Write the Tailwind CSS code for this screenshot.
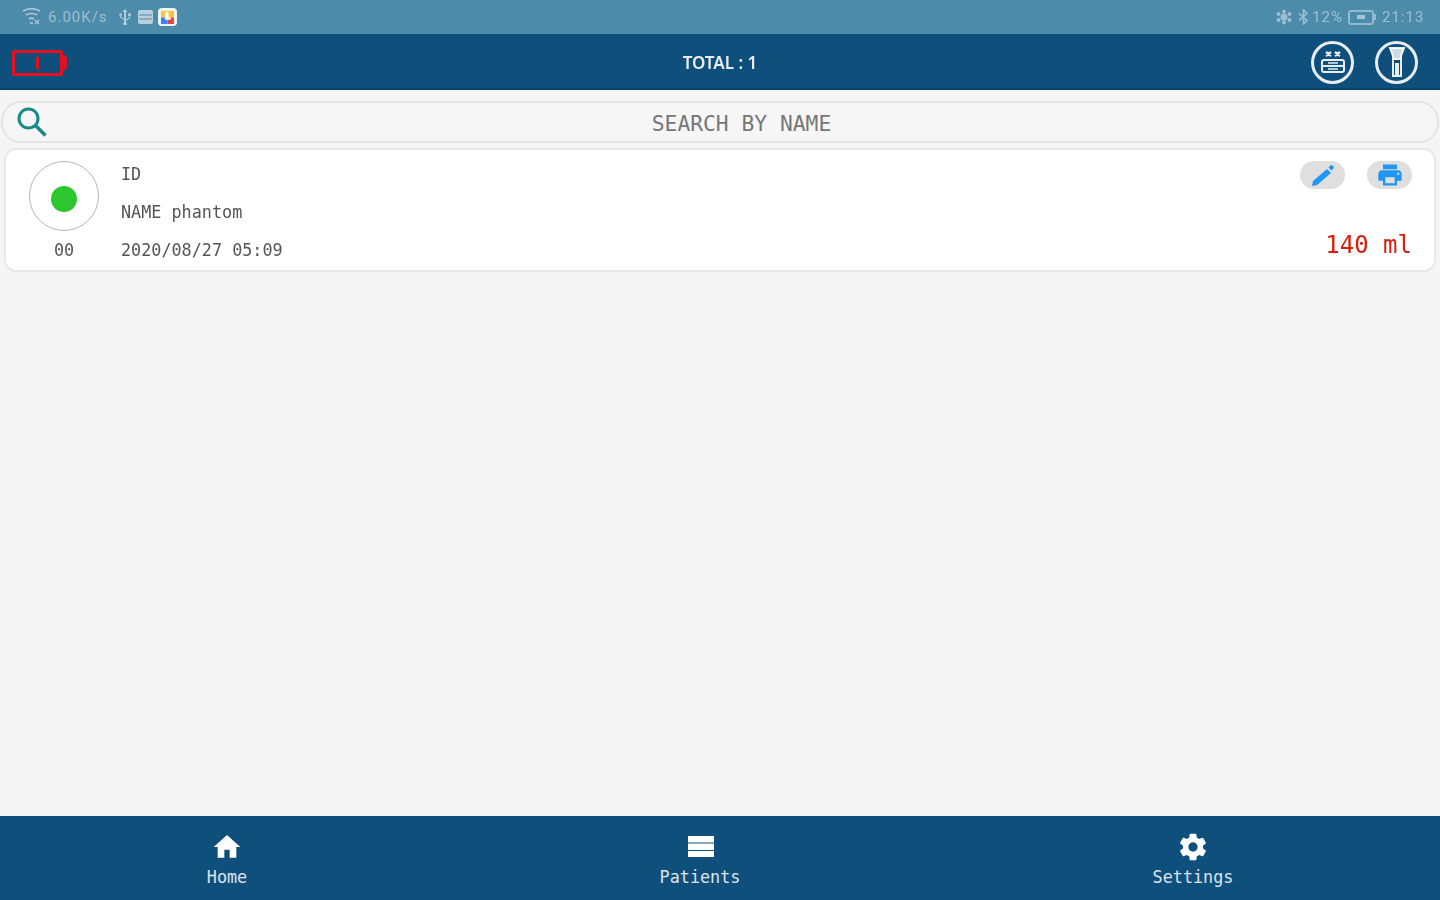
<!DOCTYPE html>
<html lang="en">
<head>
    <meta charset="UTF-8">
    <meta name="viewport" content="width=device-width, initial-scale=1.0">
    <title>Patients</title>
    <script src="https://cdn.jsdelivr.net/npm/@tailwindcss/browser@4"></script>
</head>
<body class="bg-[#f5f5f5] overflow-hidden">
    <div class="w-[1440px] h-[900px] flex flex-col font-['DejaVu_Sans_Mono',monospace] blur-[0.7px]">

        <!-- Status bar -->
        <div class="h-[34px] shrink-0 bg-[#4c8ba9] flex items-center justify-between pl-[22px] pr-[16px] text-[15px] text-white/45 font-['Roboto',sans-serif]">
            <div class="flex items-center">
                <svg class="w-[19px] h-[18px]" viewBox="0 0 19 18" fill="none" stroke="#fff" stroke-opacity=".55" stroke-width="1.6"><path d="M1 3c5-3 12-3 17 0M4 7c3-2 8-2 11 0M7 11c1.500-1 3.500-1 5 0"/><path d="M8 15h3"/><path d="M13 12l4 4M17 12l-4 4" stroke-width="1.200"/></svg>
                <span class="ml-[7px] w-[62px] tracking-[1px]">6.00K/s</span>
                <svg class="ml-[8px] w-[14px] h-[16px]" viewBox="0 0 14 16" fill="#fff" fill-opacity=".55"><path d="M7 0l2.500 3H8v7.500l3-2V7h-1V4.500h3V7h-1v2.200L8 12v1.200a1.800 1.800 0 1 1-2 0V11L2 8.500V6.700a1.300 1.300 0 1 1 1 0V8l3 1.700V3H4.500z"/></svg>
                <div class="ml-[6px] w-[15px] h-[14px] rounded-[2px] bg-white/60 flex flex-col justify-center gap-[2px] px-[1px]">
                    <div class="h-[2px] bg-[#4c8ba9]/50"></div>
                    <div class="h-[2px] bg-[#4c8ba9]/50"></div>
                </div>
                <div class="ml-[5px] w-[19px] h-[18px] rounded-[4px] bg-white/90 flex items-center justify-center">
                    <svg class="w-[13px] h-[13px]" viewBox="0 0 12 12"><rect width="6" height="6" fill="#f6c63a"/><rect x="6" width="6" height="6" fill="#f6c63a"/><rect y="6" width="6" height="6" fill="#3b82f6"/><rect x="6" y="6" width="6" height="6" fill="#e2463c"/><rect x="4" y="1" width="3" height="7" fill="#fff"/><rect x="4" y="6" width="5" height="2" fill="#fff"/></svg>
                </div>
            </div>
            <div class="flex items-center">
                <svg class="w-[18px] h-[16px]" viewBox="0 0 18 16" fill="#fff" fill-opacity=".45"><circle cx="9" cy="8" r="3.500"/><circle cx="9" cy="2.500" r="2"/><circle cx="9" cy="13.500" r="2"/><circle cx="3.500" cy="5" r="2"/><circle cx="14.500" cy="5" r="2"/><circle cx="3.500" cy="11" r="2"/><circle cx="14.500" cy="11" r="2"/></svg>
                <svg class="ml-[5px] w-[11px] h-[16px]" viewBox="0 0 11 16" fill="none" stroke="#fff" stroke-opacity=".45" stroke-width="1.600"><path d="M1 4.500l8 7-3.500 3.500V1L9 4.500l-8 7"/></svg>
                <span class="ml-[3px] tracking-[1px]">12%</span>
                <div class="ml-[5px] w-[26px] h-[15px] border-2 border-white/40 rounded-[3px] flex items-center pl-[7px]">
                    <div class="w-[8px] h-[4px] bg-white/50"></div>
                </div>
                <div class="w-[2px] h-[6px] bg-white/40"></div>
                <span class="ml-[6px] w-[42px] tracking-[1px]">21:13</span>
            </div>
        </div>

        <!-- Header -->
        <div class="relative h-[56px] shrink-0 bg-[#0f4f7c] border-b-2 border-[#0b4168] flex items-center justify-between pt-[3px] pl-[12px] pr-[22px]">
            <div class="flex items-center">
                <div class="w-[51px] h-[26px] border-[3px] border-[#e3101f] rounded-[2px] flex items-center justify-center pr-[1px]">
                    <div class="w-[3px] h-[12px] bg-[#e3101f]"></div>
                </div>
                <div class="w-[4px] h-[15px] bg-[#e3101f] rounded-r-[4px]"></div>
            </div>
            <span class="absolute inset-x-0 text-center text-[17px] font-semibold text-white/90 font-['Noto_Sans',sans-serif]">TOTAL : 1</span>
            <div class="flex items-center gap-[21px]">
                <div class="w-[43px] h-[43px] rounded-full border-[3px] border-white/90 flex items-center justify-center">
                    <svg class="w-[28px] h-[28px]" viewBox="0 0 28 28" fill="none" stroke="#fff" stroke-opacity=".9" stroke-width="2"><path d="M7 3l5 4M12 3L7 7M16 3l5 4M21 3l-5 4" stroke-width="2.400"/><rect x="3" y="11" width="22" height="12" rx="2"/><path d="M3 17h22"/><path d="M9 14h10M9 20h10" stroke-width="1.600"/></svg>
                </div>
                <div class="w-[43px] h-[43px] rounded-full border-[3px] border-white/90 flex items-center justify-center">
                    <svg class="w-[24px] h-[34px]" viewBox="0 0 24 34" fill="none" stroke="#fff" stroke-opacity=".9" stroke-width="2"><path d="M5 2h14l-3 8v3h-8v-3z" fill="#fff" fill-opacity=".8"/><path d="M8 13v17h3V18h2v12h3V13"/></svg>
                </div>
            </div>
        </div>

        <!-- Search -->
        <div class="mt-[11px] mx-[1px] h-[42px] shrink-0 rounded-[20px] border-2 border-[#e4e4e4] bg-[#f6f6f6] relative flex items-center justify-center pl-[43px] pt-[4px]">
            <svg class="absolute left-[13px] top-[3px] w-[32px] h-[32px]" viewBox="0 0 32 32" fill="none" stroke="#1a8a86" stroke-width="3"><circle cx="12.500" cy="12.500" r="9.500"/><path d="M19.500 19.500l10 10" stroke-width="3.600"/></svg>
            <span class="text-[21.300px] text-[#777]">SEARCH BY NAME</span>
        </div>

        <!-- Patient card -->
        <div class="mt-[5px] mx-[4px] h-[124px] shrink-0 bg-white rounded-[12px] border-2 border-[#e8e8e8] flex items-start pl-[22px] pr-[22px]">
            <div class="w-[72px] flex flex-col items-center pt-[11px]">
                <div class="w-[70px] h-[70px] rounded-full border border-[#b5b5b5] flex items-center justify-center pt-[6px]">
                    <div class="w-[26px] h-[26px] rounded-full bg-[#2cc72f]"></div>
                </div>
                <span class="mt-[8px] text-[16.800px] leading-[22px] text-[#555]">00</span>
            </div>
            <div class="ml-[21px] pt-[13px] flex flex-col gap-[16px] text-[16.800px] leading-[22px] text-[#555]">
                <span>ID</span>
                <span>NAME phantom</span>
                <span>2020/08/27 05:09</span>
            </div>
            <div class="ml-auto h-full flex flex-col items-end justify-between pt-[11px] pb-[11px]">
                <div class="flex gap-[22px]">
                    <div class="w-[45px] h-[28px] rounded-full bg-[#dfdfdf] flex items-center justify-center">
                        <svg class="w-[26px] h-[24px]" viewBox="0 0 26 24" fill="#2196f3"><path d="M2 23l1-5L17 6l4 4L7 22zM18.500 4.500l2-2a1.500 1.500 0 0 1 2 0l1 1a1.500 1.500 0 0 1 0 2l-2 2z"/></svg>
                    </div>
                    <div class="w-[45px] h-[28px] rounded-full bg-[#dfdfdf] flex items-center justify-center">
                        <svg class="w-[28px] h-[28px]" viewBox="0 0 24 24" fill="#2196f3"><path d="M19 8H5c-1.660 0-3 1.340-3 3v6h4v4h12v-4h4v-6c0-1.660-1.340-3-3-3zm-3 11H8v-5h8v5zm3-7a1 1 0 1 1 0-2 1 1 0 0 1 0 2zM18 3H6v4h12V3z"/></svg>
                    </div>
                </div>
                <span class="text-[24px] leading-[28px] text-[#d6200f]">140 ml</span>
            </div>
        </div>

        <!-- Bottom nav -->
        <div class="mt-auto h-[84px] shrink-0 bg-[#0f4f7c] relative text-[16.800px] text-white/85">
            <div class="absolute left-[187px] top-[15px] w-[80px] flex flex-col items-center">
                <svg class="w-[32px] h-[32px]" viewBox="0 0 24 24" fill="#fff"><path d="M10 20v-6h4v6h5v-8h3L12 3 2 12h3v8z"/></svg>
                <span class="leading-[22px] mt-[3px]">Home</span>
            </div>
            <div class="absolute left-[651px] top-[15px] w-[100px] flex flex-col items-center">
                <svg class="w-[32px] h-[32px]" viewBox="0 0 32 32" fill="#fff"><path d="M3 5h26v6.500H3zM3 12.500h26V19H3zM3 20h26v6H3z"/></svg>
                <span class="leading-[22px] mt-[3px] -ml-[2px]">Patients</span>
            </div>
            <div class="absolute left-[1143px] top-[15px] w-[100px] flex flex-col items-center">
                <svg class="w-[34px] h-[32px]" viewBox="0 0 24 24" fill="#fff"><path fill-rule="evenodd" d="M19.430 12.980c.04-.32.070-.64.070-.98s-.03-.66-.07-.98l2.110-1.650a.5.500 0 0 0 .12-.64l-2-3.460a.5.500 0 0 0-.61-.22l-2.490 1a7.300 7.300 0 0 0-1.690-.98l-.38-2.650A.49.490 0 0 0 14 2h-4a.49.490 0 0 0-.49.420l-.38 2.650c-.61.250-1.170.59-1.690.98l-2.490-1a.5.500 0 0 0-.61.220l-2 3.460a.49.490 0 0 0 .12.640l2.110 1.650c-.04.320-.07.650-.07.980s.03.660.07.980l-2.110 1.650a.5.500 0 0 0-.12.640l2 3.460c.12.220.39.300.61.220l2.490-1c.52.400 1.080.730 1.690.980l.38 2.650c.03.240.24.420.49.420h4c.25 0 .46-.18.49-.42l.38-2.650c.61-.25 1.170-.59 1.690-.98l2.490 1c.23.090.49 0 .61-.22l2-3.460a.5.500 0 0 0-.12-.64l-2.110-1.650zM12 15.500a3.500 3.500 0 1 1 0-7 3.500 3.500 0 0 1 0 7z"/></svg>
                <span class="leading-[22px] mt-[3px]">Settings</span>
            </div>
        </div>
    </div>
</body>
</html>
